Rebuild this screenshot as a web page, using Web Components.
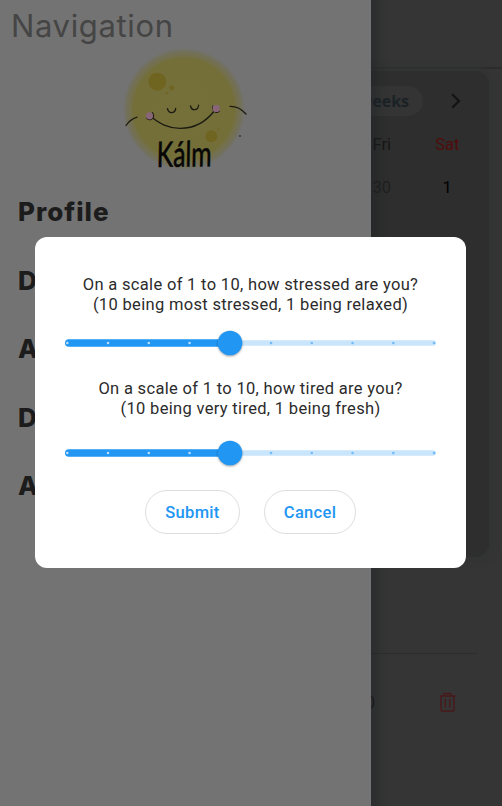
<!DOCTYPE html>
<html lang="en">
<head>
<meta charset="utf-8">
<title>Kálm</title>
<style>
html,body{margin:0;height:100%;overflow:hidden;background:#353535}
body{font-family:Roboto,"Liberation Sans",sans-serif}
</style>
</head>
<body>
<kalm-app></kalm-app>
<script>
const define = (name, html) => customElements.define(name, class extends HTMLElement {
  constructor() {
    super();
    this.attachShadow({mode: 'open'}).innerHTML = typeof html === 'function' ? html(this) : html;
  }
});

define('calendar-card', `
<style>
:host{display:block;box-sizing:border-box;width:460px;height:486px;padding:14px 0 0;border-radius:14px;background:#2e2e2e;box-shadow:0 0 6px 4px #323333}
.head{display:flex;justify-content:flex-end;align-items:center;height:32px;padding-right:21px}
.pill{box-sizing:border-box;width:96px;height:30px;border-radius:15px;background:#343434;padding-right:14px;text-align:right;font:700 16px/31px "Open Sans",sans-serif;color:#1a2226;letter-spacing:0}
svg{display:block;margin-left:21px}
.row{display:flex;justify-content:flex-end;padding-right:9px;font-size:16.500px;line-height:20px}
.row span{width:65.500px;text-align:center}
.days{margin-top:18px}.dates{margin-top:23px}
</style>
<div class="head"><span class="pill">2 weeks</span>
<svg width="24" height="24" viewBox="0 0 24 24" fill="none" stroke="#141414" stroke-width="2.2"><path d="M8.200 5.200 15 12l-6.800 6.800"/></svg></div>
<div class="row days"><span style="color:#171717">Fri</span><span style="color:#500c0a">Sat</span></div>
<div class="row dates"><span style="color:#202020">30</span><span style="color:#000">1</span></div>`);

define('home-page', `
<style>
:host{display:flex;flex-direction:column;width:502px;height:806px;background:#353535}
header{height:67px;flex:none;border-bottom:2px solid #2c2c2c;background:#353535}
.cal{display:flex;padding-left:29px;margin-top:2px;flex:none}
hr{width:450px;border:0;border-top:1px solid #2d2d2d;margin:96px 0 0 28px}
.entry{display:flex;align-items:center;justify-content:flex-end;padding-right:45px;margin-top:37px;height:22px;font-size:17px;color:#1b1b1b}
.entry svg{margin-left:63px}
</style>
<header></header><div class="cal"><calendar-card></calendar-card></div><hr>
<div class="entry"><span>10</span>
<svg width="19" height="22" viewBox="0 0 19 22" fill="none" stroke="#49191a" stroke-width="1.4"><path d="M1.500 5h16M6 5V3.300Q6 2.500 6.800 2.500h5.400q.8 0 .8.8V5M3 5.300V19q0 1 1 1h11q1 0 1-1V5.300M7.300 8v8.700M11.800 8v8.700"/></svg></div>`);

define('kalm-logo', `
<style>:host{display:block;width:122px;height:122px}svg{display:block;overflow:visible}</style>
<svg width="122" height="122" viewBox="125 48 122 122">
<defs><radialGradient id="g"><stop offset="0" stop-color="#756f39"/><stop offset=".83" stop-color="#746f39"/><stop offset=".87" stop-color="#74704b"/><stop offset=".94" stop-color="#72705a"/><stop offset="1" stop-color="#737373"/></radialGradient></defs>
<circle cx="184" cy="109" r="61" fill="url(#g)"/>
<g fill="#706421"><circle cx="157.300" cy="81.700" r="9"/><circle cx="171.700" cy="87.800" r="2.400"/><circle cx="166.700" cy="93" r="1.200"/><circle cx="211.300" cy="136.200" r="6"/><circle cx="218.300" cy="129.200" r="1"/></g>
<g fill="none" stroke="#1c1b12" stroke-width="1.3" stroke-linecap="round">
<path d="M150 116C160 124 168 128 180 128.400C194 128.500 206 122 215 110"/>
<path d="M167.500 108.700C168.500 114 175 114 175.700 108.300M190.500 106C191.500 111 198 111 198.600 105.200"/>
<path d="M126 125.500Q130 119.500 137 117.200M230 106.300Q239 106 246 114"/>
<path d="M152.500 112.800Q155 117 151 119.500Q148 120.300 146.500 118M213 106Q211.800 109 214.500 111.600Q217 113 219 111.200"/></g>
<circle cx="149.500" cy="115.800" r="3.600" fill="#886577"/><circle cx="216.200" cy="108.400" r="3.700" fill="#886577"/>
<circle cx="240" cy="136" r=".9" fill="#333"/>
<text x="0" y="0" transform="translate(156.500 167) skewX(-2) rotate(-1)" textLength="55" lengthAdjust="spacingAndGlyphs" font-family="Lato,sans-serif" font-size="35" fill="#060606" stroke="#060606" stroke-width=".6">Kálm</text>
</svg>`);

define('nav-item', `<style>:host{display:block;height:68.600px;font:800 26px/32px Inter,sans-serif;color:#1c1c1c;letter-spacing:1px}</style><slot></slot>`);

define('nav-drawer', `
<style>
:host{display:block;width:371px;height:806px;background:#737373;box-shadow:2px 0 8px 6px rgba(30,32,34,.35)}
h1{margin:0;padding:6.500px 0 0 11px;height:41.500px;font:400 31px/37px Inter,sans-serif;letter-spacing:.65px;color:#454545}
kalm-logo{margin-left:125px}
nav{padding:26px 0 0 18px}
</style>
<h1>Navigation</h1><kalm-logo></kalm-logo>
<nav><nav-item>Profile</nav-item><nav-item>D</nav-item><nav-item>A</nav-item><nav-item>D</nav-item><nav-item>A</nav-item></nav>`);

define('rating-slider', () => {
  const ticks = Array.from({length: 10}, (_, i) => `<circle cx="${2.3 + i * 40.75}" cy="14" r="1.300" fill="${i < 5 ? '#b9defb' : '#72bbf7'}"/>`).join('');
  return `<style>:host{display:block;width:371px;height:28px}svg{display:block;overflow:visible}.t{filter:drop-shadow(0 1px 1px rgba(0,0,0,.35))}</style>
<svg width="371" height="28"><rect x="160" y="11.200" width="211" height="5.600" rx="2.800" fill="#c8e5fc"/><rect y="10.200" width="170" height="7.600" rx="3.800" fill="#2196f3"/>${ticks}<circle class="t" cx="165" cy="14" r="12.300" fill="#2196f3"/></svg>`;
});

define('outline-button', `<style>:host{box-sizing:border-box;height:44px;padding-top:1px;border:1px solid #dedede;border-radius:22px;display:flex;align-items:center;justify-content:center;font:500 16.500px/20px Roboto,sans-serif;letter-spacing:.3px;color:#2196f3}</style><slot></slot>`);

define('rating-dialog', `
<style>
:host{display:flex;flex-direction:column;align-items:center;box-sizing:border-box;width:431px;height:331px;padding-top:37.500px;background:#fff;border-radius:12px;color:#2b2b2b}
p{margin:0;text-align:center;white-space:nowrap;font-size:16.500px;line-height:20px;letter-spacing:.32px}
rating-slider{margin-top:14.500px}.q2{margin-top:22px}.s2{margin-top:20px}
.actions{display:flex;gap:24px;margin-top:23px}
</style>
<p>On a scale of 1 to 10, how stressed are you?<br>(10 being most stressed, 1 being relaxed)</p><rating-slider></rating-slider>
<p class="q2">On a scale of 1 to 10, how tired are you?<br>(10 being very tired, 1 being fresh)</p><rating-slider class="s2"></rating-slider>
<div class="actions"><outline-button style="width:95px">Submit</outline-button><outline-button style="width:92px">Cancel</outline-button></div>`);

define('kalm-app', `
<style>
:host{display:block;position:relative;width:502px;height:806px;overflow:hidden}
home-page,nav-drawer,rating-dialog{position:absolute}
home-page,nav-drawer{left:0;top:0}
rating-dialog{left:35px;top:237px}
</style>
<home-page></home-page><nav-drawer></nav-drawer><rating-dialog></rating-dialog>`);
</script>
</body>
</html>
